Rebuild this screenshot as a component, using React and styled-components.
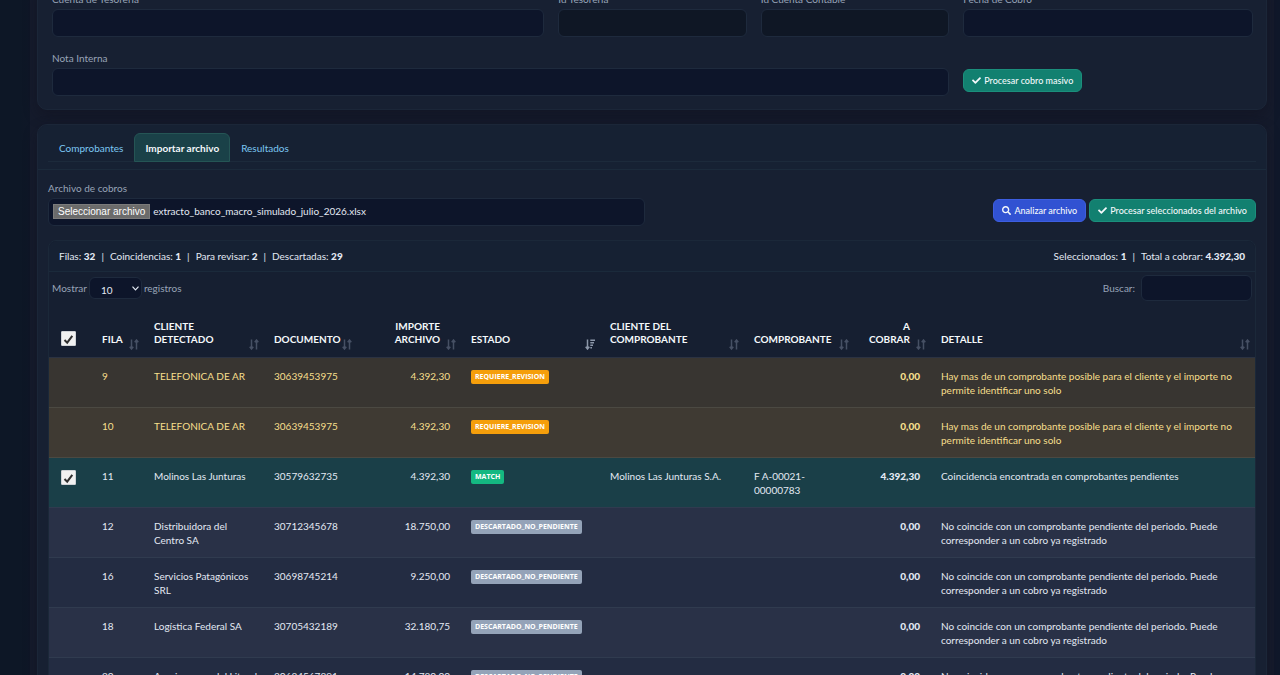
import React, { useState } from "react";
import styled, { createGlobalStyle, css } from "styled-components";
import { FaCheck, FaSearch } from "react-icons/fa";

const GlobalStyle = createGlobalStyle`
  * {
    box-sizing: border-box;
  }

  body {
    margin: 0;
    background: #0d1624;
    color: #e3e9f3;
    font-family: Lato, "Noto Sans", sans-serif;
    font-size: 10px;
    line-height: 14px;
  }

  input, select, button {
    font: inherit;
    color: inherit;
  }
`;

const Page = styled.div`
  height: 100vh;
  overflow: hidden;
  padding: 0 6px 0 30px;
  background: linear-gradient(to right, #0d1726 20px, #0f1727 30px, #10182a);
`;

const Main = styled.main`
  display: flex;
  flex-direction: column;
  gap: 14px;
  min-height: 100vh;
  padding: 0 7px;
  background: #151b2c;
`;

const Panel = styled.section`
  border: 1px solid #1b2638;
  border-radius: 10px;
  background: #172032;
  box-shadow: 0 6px 14px rgba(15, 15, 28, 0.45);
`;

const FormPanel = styled(Panel)`
  display: grid;
  grid-template-columns: repeat(12, 1fr);
  gap: 14px;
  margin-top: -22px;
  padding: 13px 13px 13px 14px;
`;

const Field = styled.div`
  display: flex;
  flex-direction: column;
  gap: 3px;
  min-width: 0;
  grid-column: span ${(p) => p.$span || 1};
`;

const Label = styled.label`
  color: #98a4b8;
`;

const Input = styled.input`
  width: 100%;
  height: 28px;
  padding: 0 8px;
  border: 1px solid #1e2a3d;
  border-radius: 6px;
  background: #0d152a;
  outline: none;

  &:disabled {
    background: #0f1725;
  }
`;

const Button = styled.button`
  display: inline-flex;
  align-items: center;
  gap: 3px;
  height: 23px;
  padding: 0 8px;
  border: 1px solid ${(p) => (p.$primary ? "#3d5ee0" : "#1b8f7c")};
  border-radius: 6px;
  background: ${(p) => (p.$primary ? "#3152d2" : "#128070")};
  color: #f4f8fb;
  font-size: 9px;
  font-weight: 500;
  white-space: nowrap;
  cursor: pointer;
`;

const FormAction = styled.div`
  grid-column: span 3;
  padding-top: 18px;
`;

const TabsBar = styled.div`
  padding: 8px 10px 7px;
  border-bottom: 1px solid #1b2a3b;
  border-radius: 10px 10px 0 0;
  background: #162133;
`;

const Tabs = styled.div`
  display: flex;
  border-bottom: 1px solid #1c2a3b;
`;

const Tab = styled.button`
  height: 29px;
  margin-bottom: -1px;
  padding: 0 10px;
  border: 1px solid transparent;
  border-radius: 6px 6px 0 0;
  background: transparent;
  color: #7cc8f4;
  cursor: pointer;

  ${(p) =>
    p.$active &&
    css`
      border-color: #255555;
      background: #1a4148;
      color: #f4f8fb;
      font-weight: 700;
    `}
`;

const PanelBody = styled.div`
  padding: 11px 10px;
`;

const ImportRow = styled.div`
  display: flex;
  justify-content: space-between;
  align-items: flex-end;
  gap: 14px;
`;

const FileField = styled(Field)`
  flex: 0 1 597px;
`;

const FileBox = styled.div`
  position: relative;
  display: flex;
  align-items: center;
  gap: 3px;
  height: 28px;
  padding: 0 4px 2px;
  border: 1px solid #1e2a3d;
  border-radius: 6px;
  background: #0d152a;
`;

const FileButton = styled.span`
  height: 15px;
  padding: 0 4px;
  border: 1px solid #7b7b7b;
  background: #6b6b6b;
  color: #ffffff;
  font-family: "Liberation Sans", Arial, sans-serif;
  line-height: 13px;
`;

const FileInput = styled.input`
  position: absolute;
  inset: 0;
  width: 100%;
  opacity: 0;
  cursor: pointer;
`;

const Actions = styled.div`
  display: flex;
  gap: 3px;
  padding-bottom: 4px;
`;

const TableCard = styled.div`
  margin-top: 14px;
  border: 1px solid #1b2839;
  border-radius: 8px 8px 0 0;
  background: #161f31;
`;

const Summary = styled.div`
  display: flex;
  justify-content: space-between;
  padding: 8px 10px;
  border-bottom: 1px solid #1b2a3b;
  border-radius: 8px 8px 0 0;
  background: #162133;
`;

const Stats = styled.div`
  display: flex;
  gap: 6px;
  white-space: nowrap;

  b {
    font-weight: 900;
  }
`;

const Toolbar = styled.div`
  display: flex;
  justify-content: space-between;
  padding: 3px 3px 2px;
  color: #98a4b8;
`;

const Length = styled.label`
  display: flex;
  align-items: center;
  gap: 2px;
`;

const SelectWrap = styled.span`
  position: relative;
  display: flex;

  svg {
    position: absolute;
    top: 9px;
    right: 3px;
    width: 7px;
    height: 5px;
    fill: none;
    stroke: #e3e9f3;
    stroke-width: 1.2;
    pointer-events: none;
  }
`;

const Select = styled.select`
  appearance: none;
  width: 53px;
  height: 22px;
  padding: 3px 0 0 11px;
  border: 1px solid #1e2a3d;
  border-radius: 6px;
  background: #0d152a;
  color: #e3e9f3;
`;

const Search = styled.label`
  display: flex;
  align-items: center;
  gap: 6px;
`;

const SearchInput = styled(Input)`
  width: 111px;
  height: 26px;
`;

const Table = styled.table`
  width: 100%;
  table-layout: fixed;
  border-collapse: collapse;
`;

const Col = styled.col`
  width: ${(p) => (p.$width ? `${p.$width}px` : "auto")};
`;

const Th = styled.th`
  position: relative;
  height: 54px;
  padding: 0 21px 11px 10px;
  border-bottom: 1px solid #2b3242;
  color: #f4f8fb;
  font-weight: 700;
  line-height: 13px;
  text-align: ${(p) => (p.$right ? "right" : "left")};
  text-transform: uppercase;
  vertical-align: bottom;
`;

const SortIcon = styled.svg`
  position: absolute;
  right: 5px;
  bottom: 7px;
  width: 10px;
  height: 11px;
  fill: none;
  stroke: ${(p) => (p.$active ? "#8c97a9" : "#465064")};
  stroke-width: 1.5;
`;

const rowColors = {
  review: ["#383531", "#3f3a33"],
  match: ["#1a3f48", "#1a3f48"],
  discarded: ["#232c42", "#293147"],
};

const Tr = styled.tr`
  height: 50px;
  border-bottom: 1px solid ${(p) => (p.$kind === "review" ? "#4b4942" : "#303b4f")};
  background: ${(p) => rowColors[p.$kind][p.$even ? 1 : 0]};
  color: ${(p) => (p.$kind === "review" ? "#f6df8c" : "#e3e9f3")};
`;

const Td = styled.td`
  padding: 11px ${(p) => (p.$right ? 11 : 5)}px 10px 10px;
  text-align: ${(p) => (p.$right ? "right" : "left")};
  font-weight: ${(p) => (p.$bold ? 900 : 400)};
  vertical-align: top;
`;

const Checkbox = styled.input`
  appearance: none;
  display: block;
  width: 15px;
  height: 15px;
  margin: 1px 0 0 2px;
  border: 1px solid #cfd2d6;
  border-radius: 1px;
  background: #f1f1f1;
`;

const CheckWrap = styled.span`
  position: relative;
  display: block;

  svg {
    position: absolute;
    top: 3px;
    left: 4px;
    width: 11px;
    height: 11px;
    fill: none;
    stroke: #303030;
    stroke-width: 2;
    pointer-events: none;
  }
`;

const badgeColors = {
  review: "#f59e0b",
  match: "#14b881",
  discarded: "#94a3b8",
};

const Badge = styled.span`
  display: inline-block;
  height: 14px;
  margin-top: 1px;
  padding: 0 4px;
  border-radius: 2px;
  background: ${(p) => badgeColors[p.$kind]};
  color: #ffffff;
  font-family: "Open Sans", sans-serif;
  font-size: 7px;
  font-weight: 700;
  vertical-align: top;
`;

const columns = [
  { title: "Fila", width: 52 },
  { title: "Cliente detectado", width: 120 },
  { title: "Documento", width: 93 },
  { title: "Importe archivo", width: 104, right: true },
  { title: "Estado", width: 139, sorted: true },
  { title: "Cliente del comprobante", width: 144 },
  { title: "Comprobante", width: 110 },
  { title: "A cobrar", width: 77, right: true },
  { title: "Detalle" },
];

const states = {
  review: {
    label: "REQUIERE_REVISION",
    detail: "Hay mas de un comprobante posible para el cliente y el importe no permite identificar uno solo",
  },
  match: {
    label: "MATCH",
    detail: "Coincidencia encontrada en comprobantes pendientes",
  },
  discarded: {
    label: "DESCARTADO_NO_PENDIENTE",
    detail: "No coincide con un comprobante pendiente del periodo. Puede corresponder a un cobro ya registrado",
  },
};

const rows = [
  { fila: 9, cliente: "TELEFONICA DE AR", documento: "30639453975", importe: "4.392,30", kind: "review" },
  { fila: 10, cliente: "TELEFONICA DE AR", documento: "30639453975", importe: "4.392,30", kind: "review" },
  {
    fila: 11,
    cliente: "Molinos Las Junturas",
    documento: "30579632735",
    importe: "4.392,30",
    kind: "match",
    clienteComprobante: "Molinos Las Junturas S.A.",
    comprobante: "F A-00021-00000783",
    cobrar: "4.392,30",
  },
  { fila: 12, cliente: "Distribuidora del Centro SA", documento: "30712345678", importe: "18.750,00", kind: "discarded" },
  { fila: 16, cliente: "Servicios Patagónicos SRL", documento: "30698745214", importe: "9.250,00", kind: "discarded" },
  { fila: 18, cliente: "Logística Federal SA", documento: "30705432189", importe: "32.180,75", kind: "discarded" },
  { fila: 20, cliente: "Agroinsumos del Litoral", documento: "30684567891", importe: "14.780,00", kind: "discarded" },
];

function Check({ label, checked, onChange }) {
  return (
    <CheckWrap>
      <Checkbox type="checkbox" aria-label={label} checked={checked} onChange={onChange} />
      {checked && (
        <svg viewBox="0 0 11 11">
          <path d="M1.5 6 L4.2 8.7 L9.3 1.8" />
        </svg>
      )}
    </CheckWrap>
  );
}

function Sort({ active }) {
  return (
    <SortIcon viewBox="0 0 10 11" $active={active}>
      <path d="M2.5 0.5 V10 M0.7 7.8 L2.5 10 L4.3 7.8" />
      {active ? (
        <path d="M5.3 1.2 H10 M5.3 3.7 H9 M5.3 6.2 H8 M5.3 8.7 H7" />
      ) : (
        <path d="M7.5 10.5 V1 M5.7 3.2 L7.5 1 L9.3 3.2" />
      )}
    </SortIcon>
  );
}

export default function App() {
  const [tab, setTab] = useState("Importar archivo");
  const [fileName, setFileName] = useState("extracto_banco_macro_simulado_julio_2026.xlsx");
  const [selected, setSelected] = useState(true);

  const toggle = () => setSelected(!selected);

  return (
    <Page>
      <GlobalStyle />
      <Main>
        <FormPanel>
          <Field $span={5}>
            <Label htmlFor="cuenta">Cuenta de Tesorería</Label>
            <Input id="cuenta" />
          </Field>
          <Field $span={2}>
            <Label htmlFor="idTesoreria">Id Tesorería</Label>
            <Input id="idTesoreria" disabled />
          </Field>
          <Field $span={2}>
            <Label htmlFor="idContable">Id Cuenta Contable</Label>
            <Input id="idContable" disabled />
          </Field>
          <Field $span={3}>
            <Label htmlFor="fecha">Fecha de Cobro</Label>
            <Input id="fecha" />
          </Field>
          <Field $span={9}>
            <Label htmlFor="nota">Nota Interna</Label>
            <Input id="nota" />
          </Field>
          <FormAction>
            <Button type="button">
              <FaCheck /> Procesar cobro masivo
            </Button>
          </FormAction>
        </FormPanel>

        <Panel>
          <TabsBar>
            <Tabs role="tablist">
              {["Comprobantes", "Importar archivo", "Resultados"].map((name) => (
                <Tab
                  key={name}
                  type="button"
                  role="tab"
                  aria-selected={tab === name}
                  $active={tab === name}
                  onClick={() => setTab(name)}
                >
                  {name}
                </Tab>
              ))}
            </Tabs>
          </TabsBar>

          <PanelBody>
            <ImportRow>
              <FileField>
                <Label htmlFor="archivo">Archivo de cobros</Label>
                <FileBox>
                  <FileButton>Seleccionar archivo</FileButton>
                  <span>{fileName}</span>
                  <FileInput
                    id="archivo"
                    type="file"
                    onChange={(e) => e.target.files[0] && setFileName(e.target.files[0].name)}
                  />
                </FileBox>
              </FileField>
              <Actions>
                <Button type="button" $primary>
                  <FaSearch /> Analizar archivo
                </Button>
                <Button type="button">
                  <FaCheck /> Procesar seleccionados del archivo
                </Button>
              </Actions>
            </ImportRow>

            <TableCard>
              <Summary>
                <Stats>
                  <span>Filas: <b>32</b></span>
                  <span>|</span>
                  <span>Coincidencias: <b>1</b></span>
                  <span>|</span>
                  <span>Para revisar: <b>2</b></span>
                  <span>|</span>
                  <span>Descartadas: <b>29</b></span>
                </Stats>
                <Stats>
                  <span>Seleccionados: <b>{selected ? 1 : 0}</b></span>
                  <span>|</span>
                  <span>Total a cobrar: <b>{selected ? "4.392,30" : "0,00"}</b></span>
                </Stats>
              </Summary>
              <Toolbar>
                <Length>
                  Mostrar
                  <SelectWrap>
                    <Select defaultValue="10">
                      <option>10</option>
                      <option>25</option>
                      <option>50</option>
                    </Select>
                    <svg viewBox="0 0 7 5">
                      <path d="M0.5 0.7 L3.5 3.8 L6.5 0.7" />
                    </svg>
                  </SelectWrap>
                  registros
                </Length>
                <Search>
                  Buscar:
                  <SearchInput type="search" />
                </Search>
              </Toolbar>
              <Table>
                <colgroup>
                  <Col $width={43} />
                  {columns.map((c) => (
                    <Col key={c.title} $width={c.width} />
                  ))}
                </colgroup>
                <thead>
                  <tr>
                    <Th>
                      <Check label="Seleccionar todo" checked={selected} onChange={toggle} />
                    </Th>
                    {columns.map((c) => (
                      <Th key={c.title} $right={c.right}>
                        {c.title}
                        <Sort active={c.sorted} />
                      </Th>
                    ))}
                  </tr>
                </thead>
                <tbody>
                  {rows.map((row, i) => (
                    <Tr key={row.fila} $kind={row.kind} $even={i % 2 === 1}>
                      <Td>
                        {row.kind === "match" && (
                          <Check label={`Seleccionar fila ${row.fila}`} checked={selected} onChange={toggle} />
                        )}
                      </Td>
                      <Td>{row.fila}</Td>
                      <Td>{row.cliente}</Td>
                      <Td>{row.documento}</Td>
                      <Td $right>{row.importe}</Td>
                      <Td>
                        <Badge $kind={row.kind}>{states[row.kind].label}</Badge>
                      </Td>
                      <Td>{row.clienteComprobante}</Td>
                      <Td>{row.comprobante}</Td>
                      <Td $right $bold>{row.cobrar || "0,00"}</Td>
                      <Td>{states[row.kind].detail}</Td>
                    </Tr>
                  ))}
                </tbody>
              </Table>
            </TableCard>
          </PanelBody>
        </Panel>
      </Main>
    </Page>
  );
}
